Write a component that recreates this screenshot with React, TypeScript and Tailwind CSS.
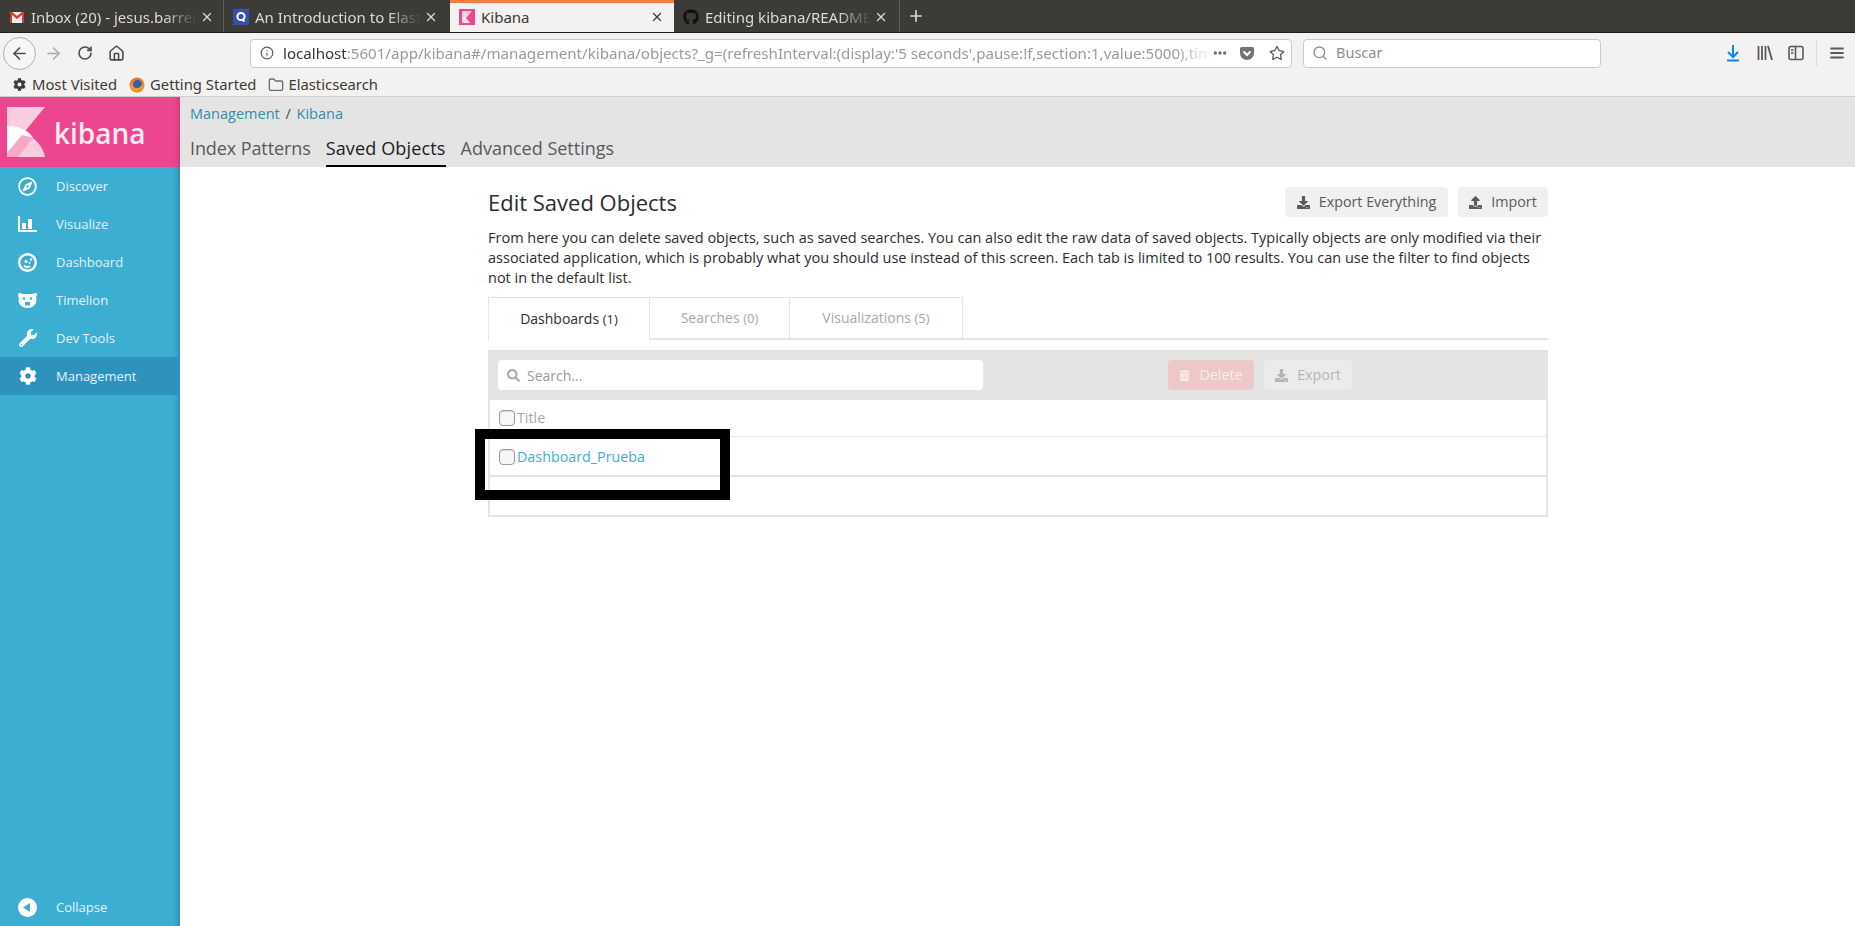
import React from "react";
import { FaCog, FaWrench, FaTrashAlt, FaSearch, FaDownload, FaUpload, FaGithub, FaRegStar, FaRegCompass } from "react-icons/fa";
import { LuArrowLeft, LuArrowRight, LuRotateCw, LuHouse, LuX, LuPlus, LuSearch, LuInfo, LuMenu, LuEllipsis, LuFolder } from "react-icons/lu";

const ui = "font-['Noto_Sans',sans-serif]";
const os = "font-['Open_Sans',sans-serif]";

function KibanaFavicon({ size = 16 }: { size?: number }) {
  return (
    <svg width={size} height={size} viewBox="0 0 16 16">
      <rect width="16" height="16" fill="#ec478e" />
      <path d="M3 2h10L3 14z" fill="#f9cde0" />
      <path d="M3 8c3 0 6 2 8 6H4z" fill="#fff" opacity=".85" />
    </svg>
  );
}

function GmailIcon() {
  return (
    <svg width="16" height="16" viewBox="0 0 16 16">
      <rect x="1" y="3" width="14" height="11" fill="#f4efec" />
      <path d="M1 3h2l5 4 5-4h2v11h-2V6L8 10 3 6v8H1z" fill="#d6392e" />
    </svg>
  );
}

function QIcon() {
  return (
    <svg width="16" height="16" viewBox="0 0 16 16">
      <rect width="16" height="16" fill="#3550ae" />
      <circle cx="8" cy="7.5" r="3.6" fill="none" stroke="#fff" strokeWidth="2" />
      <path d="M9 10l2.5 2.5" stroke="#fff" strokeWidth="2" />
    </svg>
  );
}

function BrowserTab({ icon, title, x, active }: { icon: React.ReactNode; title: string; x: string; active?: boolean }) {
  return (
    <div className={`${x} relative flex h-full shrink-0 items-center ${active ? "bg-[#f3f2f0] border-t-[3px] border-[#f27a4b] pb-[1px] text-[#3c3b37]" : "pt-[2px] text-[#dcdad5]"}`}>
      <span className="ml-[9px] flex w-[16px] shrink-0 items-center justify-center">{icon}</span>
      <span className={`ml-[6px] w-[166px] overflow-hidden whitespace-nowrap text-[15px] ${active ? "" : "[mask-image:linear-gradient(to_right,black_80%,transparent)]"}`}>{title}</span>
      <LuX className={`ml-[3px] ${active ? "text-[#3c3b37]" : "text-[#dcdad5]"}`} size={14} strokeWidth={2.2} />
    </div>
  );
}

function Library() {
  return (
    <svg width="16" height="16" viewBox="0 0 16 16" fill="none" stroke="#5a5a58" strokeWidth="1.8">
      <path d="M1.5 1v14M5 1v14M8.5 1v14M11 1l4 14" />
    </svg>
  );
}

function SidebarIcon() {
  return (
    <svg width="16" height="16" viewBox="0 0 16 16" fill="none" stroke="#5a5a58" strokeWidth="1.6">
      <rect x="1" y="1.5" width="14" height="13" rx="2" />
      <path d="M7.5 1.5v13" />
      <path d="M3 5h2.5M3 8h2.5" />
    </svg>
  );
}

function PocketIcon() {
  return (
    <svg width="16" height="16" viewBox="0 0 16 16">
      <path d="M1 3.5A1.5 1.5 0 0 1 2.5 2h11A1.5 1.5 0 0 1 15 3.5V8A7 7 0 0 1 1 8z" fill="#737373" />
      <path d="M4.5 6.5L8 10l3.5-3.5" fill="none" stroke="#fff" strokeWidth="2" />
    </svg>
  );
}

function FirefoxIcon() {
  return (
    <svg width="16" height="16" viewBox="0 0 16 16">
      <circle cx="8" cy="8" r="7.5" fill="#e8781f" />
      <circle cx="8.5" cy="7.5" r="4.4" fill="#2f5fb0" />
      <path d="M1 9c1 5 7 7 11 4.5 3-2 3.5-6 2-9-.5 4-3 6.5-6 6.5S3 9.500 3 6z" fill="#f0a020" />
    </svg>
  );
}

const white = "#ffffff";

function NavIcon({ kind }: { kind: string }) {
  if (kind === "discover") return <FaRegCompass size={19} color={white} />;
  if (kind === "visualize")
    return (
      <svg width="19" height="16" viewBox="0 0 19 16" fill={white}>
        <path d="M0 0h2v14h17v2H0z" />
        <rect x="4" y="7" width="4" height="6" />
        <rect x="10" y="3" width="4" height="10" />
      </svg>
    );
  if (kind === "dashboard")
    return (
      <svg width="19" height="19" viewBox="0 0 19 19">
        <circle cx="9.500" cy="9.500" r="8.300" fill="none" stroke={white} strokeWidth="2.400" />
        <circle cx="8" cy="8.500" r="1.500" fill={white} />
        <circle cx="13" cy="6.500" r="1.300" fill={white} />
        <circle cx="11.500" cy="10" r="1" fill={white} />
        <path d="M6 12.500c1.500 1.500 4 2 6 .5" fill="none" stroke={white} strokeWidth="1.800" />
      </svg>
    );
  if (kind === "timelion")
    return (
      <svg width="19" height="15" viewBox="0 0 19 15">
        <path d="M0 1.500C0 .5 1 0 2 0c1 0 1.500.5 2.500 1h10c1-.5 1.500-1 2.500-1s2 .5 2 1.500c0 1-.5 1.500-1 2 0 0 .5 2 .5 3C18.500 12 14 15 9.500 15S.5 12 .5 7.500c0-1 .5-3 .5-3-.5-.5-1-1-1-2z" fill={white} />
        <circle cx="6" cy="5.500" r="1.300" fill="#3caed2" />
        <circle cx="13" cy="5.500" r="1.300" fill="#3caed2" />
        <path d="M7 9h5v3.500H7z" fill="#3caed2" />
      </svg>
    );
  if (kind === "tools") return <FaWrench size={18} color={white} />;
  if (kind === "mgmt") return <FaCog size={18} color={white} />;
  return (
    <svg width="19" height="19" viewBox="0 0 19 19">
      <circle cx="9.500" cy="9.500" r="9.500" fill={white} />
      <path d="M5 9.500L12 5v9z" fill="#3caed2" />
    </svg>
  );
}

function NavItem({ kind, label, active }: { kind: string; label: string; active?: boolean }) {
  return (
    <div className={`flex h-[38px] items-center ${active ? "bg-[#2d93bd]" : ""}`}>
      <span className="flex w-[56px] shrink-0 justify-center pr-[1px]"><NavIcon kind={kind} /></span>
      <span className="pt-[2px] text-[13px] text-[#e3f3f8]">{label}</span>
    </div>
  );
}

function KibanaLogo() {
  return (
    <svg width="38" height="50" viewBox="0 0 38 50">
      <path d="M0 0h38L0 46z" fill="#f9cde0" />
      <path d="M0 19c17 0 24 8 26 12L11 50H0z" fill="#ffffff" />
      <path d="M0 46l15-18c5 1 10 2 11 3L11 50H0z" fill="#f7a8c8" />
      <path d="M26 31c6 5 11 12 12 19H11z" fill="#f9cde0" />
    </svg>
  );
}

function GrayButton({ icon, label, w, extra }: { icon: React.ReactNode; label: string; w: string; extra?: string }) {
  return (
    <div className={`${w} flex h-[30px] shrink-0 items-center justify-center gap-[9px] rounded-[4px] text-[14.3px] ${extra ?? "bg-[#f0f0f0] text-[#5a5a5a]"}`}>
      {icon}
      <span>{label}</span>
    </div>
  );
}

function Check() {
  return <span className="block h-[16px] w-[16px] shrink-0 rounded-[4px] border border-[#9b9b9b] bg-[#f7f7f7] shadow-[inset_0_1px_1px_rgba(0,0,0,.12)]" />;
}

export default function App() {
  return (
    <div className="flex h-[926px] w-[1855px] flex-col overflow-hidden bg-white">
      {/* browser tabs */}
      <div className={`${ui} flex h-[33px] shrink-0 items-stretch border-b border-[#1f1e1b] bg-[#3c3b37]`}>
        <div className="flex h-[32px] items-stretch">
          <BrowserTab x="w-[224px] border-r border-[#5e5d58] my-0" icon={<GmailIcon />} title="Inbox (20) - jesus.barrera" />
          <BrowserTab x="w-[226px]" icon={<QIcon />} title="An Introduction to Elastic" />
          <BrowserTab x="w-[224px]" active icon={<KibanaFavicon />} title="Kibana" />
          <BrowserTab x="w-[226px] border-r border-[#5e5d58]" icon={<FaGithub size={16} color="#111" />} title="Editing kibana/README" />
          <div className="flex w-[32px] items-center justify-center text-[#dcdad5]"><LuPlus size={18} strokeWidth={2.2} /></div>
        </div>
      </div>

      {/* nav bar */}
      <div className={`${ui} flex h-[40px] shrink-0 items-center bg-[#f3f2f0] text-[#4d4c4a]`}>
        <div className="ml-[3px] flex h-[33px] w-[33px] items-center justify-center rounded-full border border-[#b0aeaa] bg-[#f7f6f4]"><LuArrowLeft size={19} /></div>
        <LuArrowRight size={19} className="ml-[8px] text-[#aeacaa]" />
        <LuRotateCw size={16} className="ml-[14px]" strokeWidth={2.4} />
        <LuHouse size={17} className="ml-[15px]" strokeWidth={2.2} />
        <div className="ml-[125px] flex h-[29px] w-[1042px] items-center rounded-[4px] border border-[#cdcac6] bg-white text-[15.1px]">
          <LuInfo size={14} className="ml-[9px] shrink-0 text-[#5d5d5b]" />
          <span className="ml-[9px] w-[930px] overflow-hidden whitespace-nowrap text-[#9a9a98] [mask-image:linear-gradient(to_right,black_96%,transparent)]">
            <span className="text-[#333]">localhost</span>:5601/app/kibana#/management/kibana/objects?_g=(refreshInterval:(display:'5 seconds',pause:!f,section:1,value:5000),time:(from:now)
          </span>
          <LuEllipsis size={16} className="ml-auto text-[#6a6a68]" strokeWidth={3} />
          <span className="ml-[11px]"><PocketIcon /></span>
          <FaRegStar size={16} className="ml-[14px] mr-[6px] text-[#5d5d5b]" />
        </div>
        <div className="ml-[11px] flex h-[29px] w-[298px] items-center rounded-[4px] border border-[#cdcac6] bg-white text-[14.5px] text-[#8f8f8d]">
          <LuSearch size={16} className="ml-[8px]" />
          <span className="ml-[8px]">Buscar</span>
        </div>
        <svg className="ml-[125px]" width="14" height="18" viewBox="0 0 14 18" fill="none" stroke="#0a84ff" strokeWidth="2">
          <path d="M7 1v12M2 8l5 5 5-5M1 16.500h12" />
        </svg>
        <span className="ml-[17px]"><Library /></span>
        <span className="ml-[15px]"><SidebarIcon /></span>
        <span className="ml-[12px] h-[26px] w-px bg-[#dcdad6]" />
        <LuMenu size={18} className="ml-[11px] text-[#5a5a58]" strokeWidth={2.4} />
      </div>

      {/* bookmarks */}
      <div className={`${ui} flex h-[24px] shrink-0 items-center border-b border-[#cfcdca] bg-[#f3f2f0] text-[14.8px] text-[#3c3b37]`}>
        <FaCog size={13} className="ml-[13px]" />
        <span className="ml-[6px]">Most Visited</span>
        <span className="ml-[12px]"><FirefoxIcon /></span>
        <span className="ml-[5px]">Getting Started</span>
        <LuFolder size={16} className="ml-[12px] text-[#6a6a68]" />
        <span className="ml-[4px]">Elasticsearch</span>
      </div>

      {/* kibana app */}
      <div className={`${os} flex min-h-0 flex-1`}>
        <aside className="flex w-[180px] shrink-0 flex-col bg-[#3caed2] shadow-[inset_-6px_0_6px_-5px_rgba(0,0,0,.3)]">
          <div className="flex h-[70px] items-center bg-[#ec478e] shadow-[inset_-6px_0_6px_-5px_rgba(0,0,0,.2)]">
            <span className="ml-[7px]"><KibanaLogo /></span>
            <span className="ml-[9px] pt-[2px] text-[28px] font-semibold leading-none text-[#fdeaf2]">kibana</span>
          </div>
          <NavItem kind="discover" label="Discover" />
          <NavItem kind="visualize" label="Visualize" />
          <NavItem kind="dashboard" label="Dashboard" />
          <NavItem kind="timelion" label="Timelion" />
          <NavItem kind="tools" label="Dev Tools" />
          <NavItem kind="mgmt" label="Management" active />
          <div className="mt-auto"><NavItem kind="collapse" label="Collapse" /></div>
        </aside>

        <main className="min-w-0 flex-1">
          <div className="h-[70px] bg-[#e4e4e4] pl-[10px]">
            <div className="pt-[7px] text-[14.5px] leading-[20px] text-[#328caa]">
              Management <span className="mx-[2px] text-[#4a4a4a]">/</span> Kibana
            </div>
            <div className="mt-[12px] flex gap-[15px] text-[18px] leading-[24px] text-[#5a5a5a]">
              <span className="h-[31px] tracking-[-0.1px]">Index Patterns</span>
              <span className="h-[31px] border-b-2 border-black tracking-[0.15px] text-[#222]">Saved Objects</span>
              <span className="h-[31px]">Advanced Settings</span>
            </div>
          </div>

          <div className="ml-[308px] w-[1060px]">
            <div className="flex items-start justify-between pt-[20px]">
              <h1 className="text-[22px] leading-[30px] text-[#2d2d2d]">Edit Saved Objects</h1>
              <div className="flex gap-[10px]">
                <GrayButton w="w-[163px]" icon={<FaDownload size={13} />} label="Export Everything" />
                <GrayButton w="w-[90px]" icon={<FaUpload size={13} />} label="Import" />
              </div>
            </div>
            <p className="mt-[11px] text-[14.5px] leading-[20px] text-[#2d2d2d]">
              From here you can delete saved objects, such as saved searches. You can also edit the raw data of saved objects. Typically objects are only modified via their associated application, which is probably what you should use instead of this screen. Each tab is limited to 100 results. You can use the filter to find objects not in the default list.
            </p>

            <div className="mt-[9px] flex h-[43px] border-b-2 border-[#e4e4e4] text-[14px]">
              <div className="relative flex h-[43px] w-[162px] items-center justify-center border-x border-t border-[#e4e4e4] bg-white text-[#2d2d2d]">
                <span>Dashboards <span className="text-[13px]">(1)</span></span>
              </div>
              <div className="flex h-[41px] w-[140px] items-center justify-center border-t border-r border-[#e4e4e4] text-[#a8a8a8]">
                <span>Searches <span className="text-[13px]">(0)</span></span>
              </div>
              <div className="flex h-[41px] w-[173px] items-center justify-center border-t border-r border-[#e4e4e4] text-[#a8a8a8]">
                <span>Visualizations <span className="text-[13px]">(5)</span></span>
              </div>
            </div>

            <div className="mt-[10px] flex h-[50px] items-center bg-[#e4e4e4] pl-[10px]">
              <div className="flex h-[30px] w-[485px] items-center rounded-[4px] bg-white text-[14px] text-[#9a9a9a]">
                <FaSearch size={13} className="ml-[9px] text-[#a8a8a8]" />
                <span className="ml-[7px]">Search...</span>
              </div>
              <GrayButton w="w-[86px] ml-[185px]" extra="bg-[#ecc9c6] text-[#f7eeec]" icon={<FaTrashAlt size={11} />} label="Delete" />
              <GrayButton w="w-[88px] ml-[10px]" extra="bg-[#ebebeb] text-[#b5b5b5]" icon={<FaDownload size={13} />} label="Export" />
            </div>

            <div className="relative border-x-2 border-b-2 border-[#e4e4e4] text-[14.3px]">
              <div className="flex h-[37px] items-center gap-[2px] border-b border-[#e4e4e4] pl-[9px] text-[#a8a8a8]">
                <Check /><span>Title</span>
              </div>
              <div className="flex h-[40px] items-center gap-[2px] border-b-2 border-[#e4e4e4] pl-[9px] pt-[1px] text-[#3caed2]">
                <Check /><span>Dashboard_Prueba</span>
              </div>
              <div className="h-[38px]" />
              <div className="absolute left-[-15px] top-[29px] h-[71px] w-[255px] border-[10px] border-black" />
            </div>
          </div>
        </main>
      </div>
    </div>
  );
}
